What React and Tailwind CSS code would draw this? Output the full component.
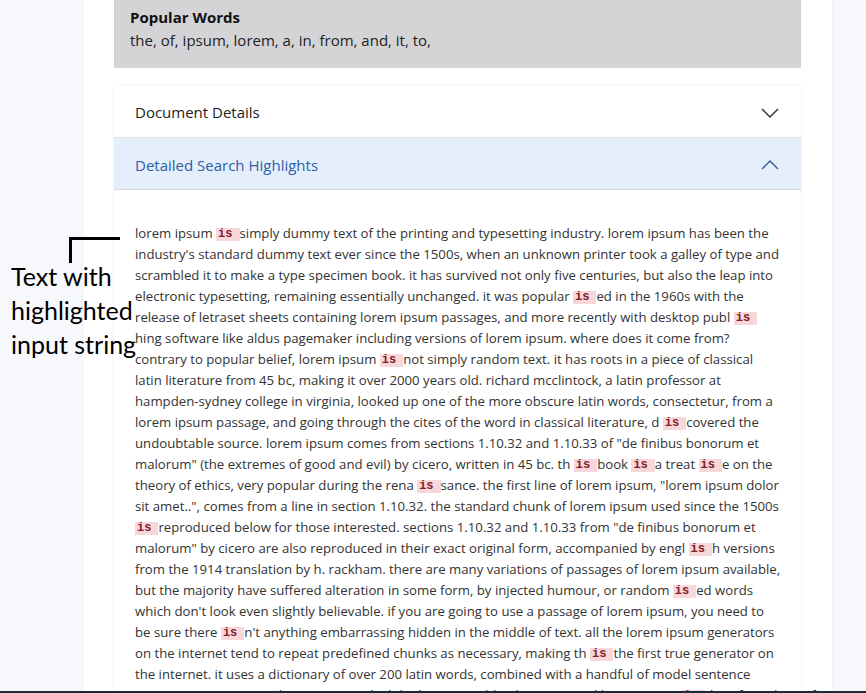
import React from "react";

const LINES = [
  "lorem ipsum [is]simply dummy text of the printing and typesetting industry. lorem ipsum has been the",
  "industry's standard dummy text ever since the 1500s, when an unknown printer took a galley of type and",
  "scrambled it to make a type specimen book. it has survived not only five centuries, but also the leap into",
  "electronic typesetting, remaining essentially unchanged. it was popular [is]ed in the 1960s with the",
  "release of letraset sheets containing lorem ipsum passages, and more recently with desktop publ [is]",
  "hing software like aldus pagemaker including versions of lorem ipsum. where does it come from?",
  "contrary to popular belief, lorem ipsum [is]not simply random text. it has roots in a piece of classical",
  "latin literature from 45 bc, making it over 2000 years old. richard mcclintock, a latin professor at",
  "hampden-sydney college in virginia, looked up one of the more obscure latin words, consectetur, from a",
  "lorem ipsum passage, and going through the cites of the word in classical literature, d [is]covered the",
  "undoubtable source. lorem ipsum comes from sections 1.10.32 and 1.10.33 of \"de finibus bonorum et",
  "malorum\" (the extremes of good and evil) by cicero, written in 45 bc. th [is]book [is]a treat [is]e on the",
  "theory of ethics, very popular during the rena [is]sance. the first line of lorem ipsum, \"lorem ipsum dolor",
  "sit amet..\", comes from a line in section 1.10.32. the standard chunk of lorem ipsum used since the 1500s",
  "[is]reproduced below for those interested. sections 1.10.32 and 1.10.33 from \"de finibus bonorum et",
  "malorum\" by cicero are also reproduced in their exact original form, accompanied by engl [is]h versions",
  "from the 1914 translation by h. rackham. there are many variations of passages of lorem ipsum available,",
  "but the majority have suffered alteration in some form, by injected humour, or random [is]ed words",
  "which don't look even slightly believable. if you are going to use a passage of lorem ipsum, you need to",
  "be sure there [is]n't anything embarrassing hidden in the middle of text. all the lorem ipsum generators",
  "on the internet tend to repeat predefined chunks as necessary, making th [is]the first true generator on",
  "the internet. it uses a dictionary of over 200 latin words, combined with a handful of model sentence",
  "structures, to generate lorem ipsum which looks reasonable. the generated lorem ipsum [is]therefore always free",
];

function Line({ text }) {
  const parts = text.split("[is]");
  return (
    <div className="whitespace-pre h-[21px]">
      {parts.map((p, i) => (
        <React.Fragment key={i}>
          {p}
          {i < parts.length - 1 && (
            <span className="bg-[#f8d7da] text-[#842029] font-bold text-[12px] leading-[13px] inline-block pl-[2px] pr-[7px] font-['Liberation_Mono',monospace] align-[1px]">
              is
            </span>
          )}
        </React.Fragment>
      ))}
    </div>
  );
}

function ChevronDown({ className }) {
  return (
    <svg width="18" height="10" viewBox="0 0 18 10" className={className} fill="none">
      <polyline points="1,1 9,9 17,1" stroke="currentColor" strokeWidth="1.5" strokeLinejoin="round" />
    </svg>
  );
}

function ChevronUp({ className }) {
  return (
    <svg width="18" height="10" viewBox="0 0 18 10" className={className} fill="none">
      <polyline points="1,9 9,1 17,9" stroke="currentColor" strokeWidth="1.5" strokeLinejoin="round" />
    </svg>
  );
}

export default function App() {
  return (
    <div className="relative h-[693px] overflow-hidden bg-[#f6f8fb] flex flex-col font-['Open_Sans',sans-serif] text-[#212529]">
      <div className="flex-1 overflow-hidden">
        <div className="ml-[82px] w-[751px] h-full bg-white border-x border-[#eef1f5] px-[31px]">
          <div className="h-[68px] bg-[#d4d4d6] pl-[16px] pt-[6px]">
            <div className="font-bold text-[15px] leading-[23px] text-[#111]">Popular Words</div>
            <div className="text-[15px] leading-[23px] text-[#222]">the, of, ipsum, lorem, a, in, from, and, it, to,</div>
          </div>
          <div className="mt-[18px] bg-white shadow-[0_0_3px_rgba(0,0,0,0.08)]">
            <div className="h-[52px] flex items-center justify-between pl-[21px] pr-[22px] pt-[2px] border-b border-[#dde1e6]">
              <span className="text-[15px] text-[#222]">Document Details</span>
              <ChevronDown className="text-[#333]" />
            </div>
            <div className="h-[52px] flex items-center justify-between pl-[21px] pr-[22px] pt-[3px] bg-[#e5effc] border-b border-[#d3dbe6]">
              <span className="text-[15px] text-[#2f5ea6]">Detailed Search Highlights</span>
              <ChevronUp className="text-[#3c5f93]" />
            </div>
            <div className="pl-[21px] pt-[33px] text-[13.2px] leading-[21px] text-[#333]">
              {LINES.map((l, i) => (
                <Line key={i} text={l} />
              ))}
            </div>
          </div>
        </div>
      </div>
      <div className="h-[2px] bg-[#1c2a38]" />

      <div className="absolute left-[69px] top-[237px] w-[51px] h-[3px] bg-black" />
      <div className="absolute left-[69px] top-[237px] w-[3px] h-[26px] bg-black" />
      <div className="absolute left-[11px] top-[259px] font-['Lato',sans-serif] text-[25px] leading-[34px] text-black">
        <div>Text with</div>
        <div>highlighted</div>
        <div>input string</div>
      </div>
    </div>
  );
}
